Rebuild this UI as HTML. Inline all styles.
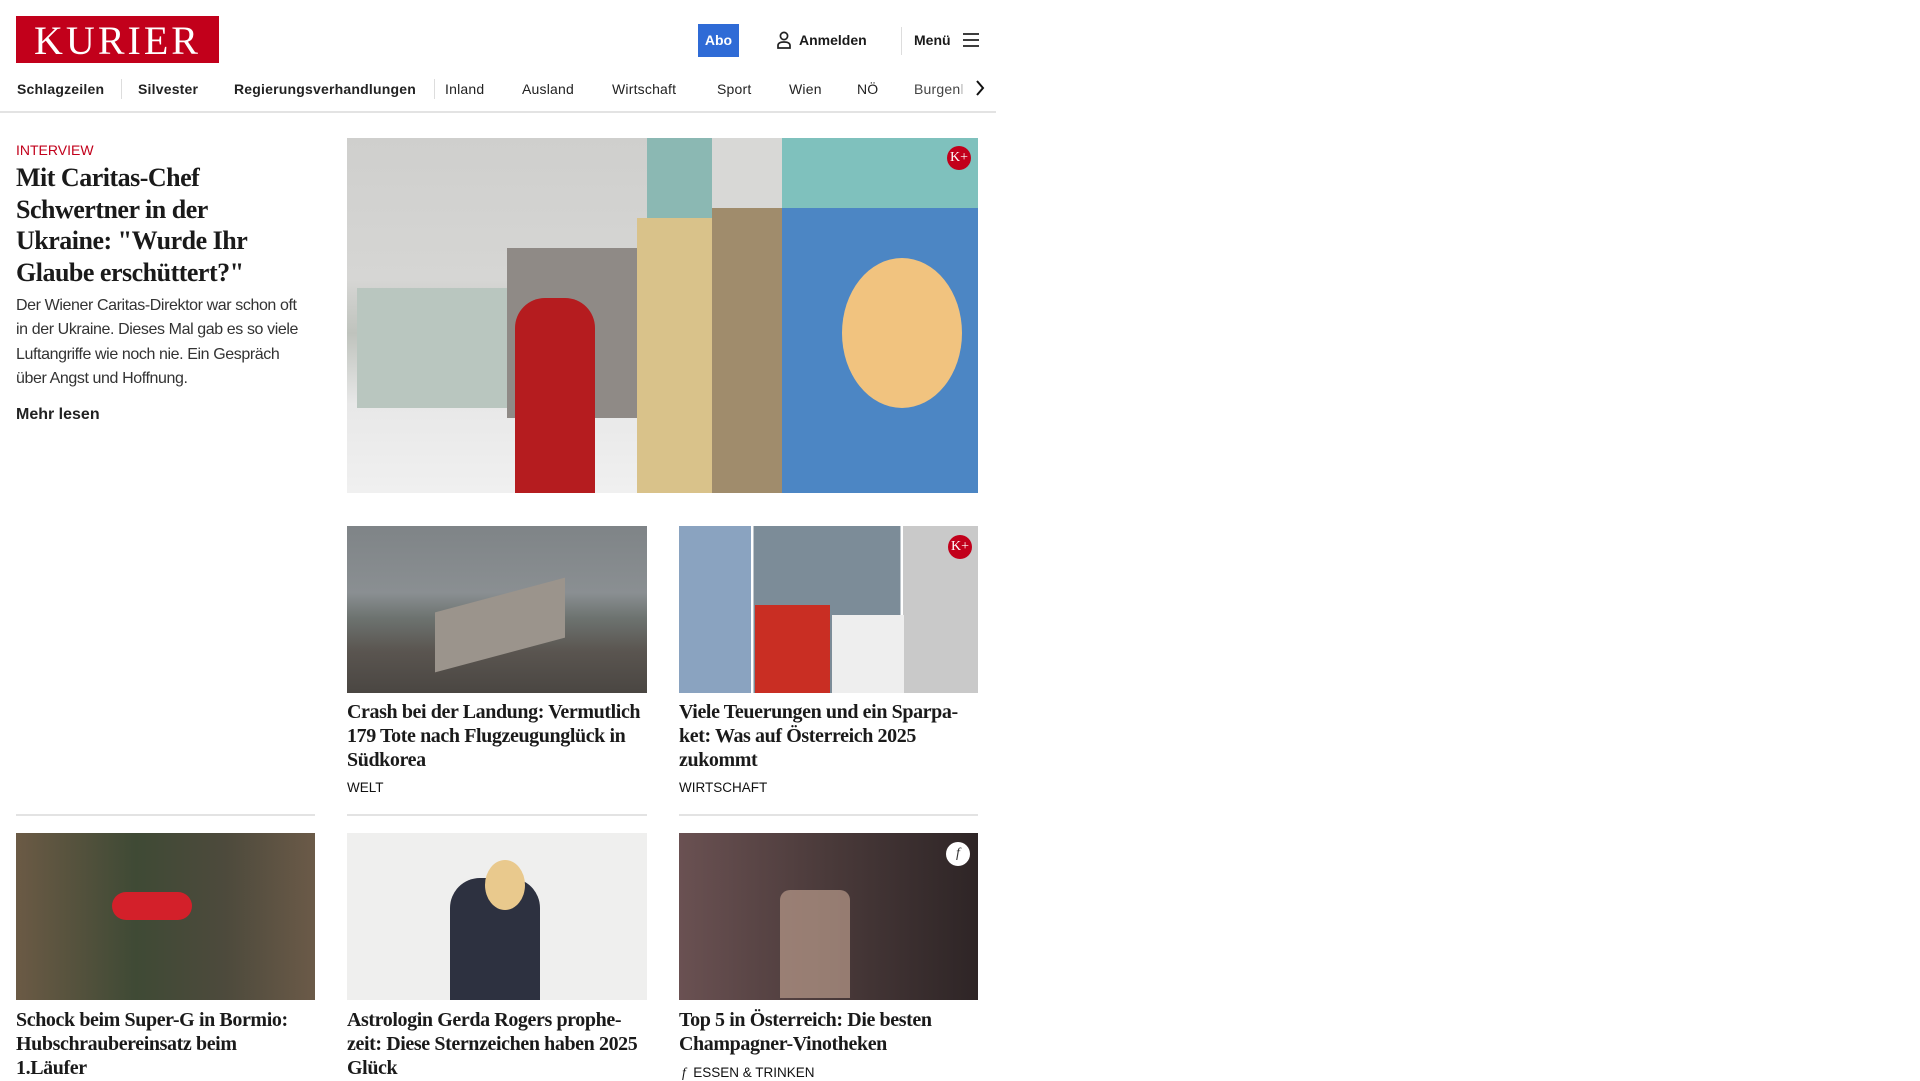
<!DOCTYPE html>
<html><head><meta charset="utf-8"><style>
*{margin:0;padding:0;box-sizing:border-box}
body{width:1920px;height:1080px;background:#fff;font-family:"Liberation Sans",sans-serif;color:#1a1a1a;overflow:hidden;position:relative}
.a{position:absolute}
.logo{left:16px;top:16px;width:203px;height:47px;background:#c2001b;color:#fff;font-family:"Liberation Serif",serif;font-size:40px;letter-spacing:3px;text-align:center;line-height:49px}
.abo{left:698px;top:24px;width:41px;height:33px;background:#2f6bd6;color:#fff;font-weight:bold;font-size:14px;text-align:center;line-height:33px}
.top{font-size:14px;font-weight:bold;top:32px}
.nav{top:81px;font-size:14px;color:#222;letter-spacing:0.2px}
.nav b{font-weight:bold}
.vd{width:1px;background:#ddd}
.serif{font-family:"Liberation Serif",serif;font-weight:bold;color:#1a1a1a}
.ct{font-size:20px;line-height:24px;letter-spacing:-0.4px;white-space:nowrap}
.cat{font-size:13.5px;color:#111}
.hr{height:2px;background:#e3e3e3}
.plus{width:24px;height:24px;border-radius:50%;background:#c2001b;color:#fff;font-family:"Liberation Serif",serif;font-size:14px;text-align:center;line-height:24px}
</style></head><body>
<div class="a logo">KURIER</div>
<div class="a abo">Abo</div>
<svg class="a" style="left:776px;top:31px" width="16" height="18" viewBox="0 0 16 18"><circle cx="8" cy="5" r="3.6" fill="none" stroke="#222" stroke-width="1.7"/><path d="M2 17v-2.5c0-2 2-3.5 6-3.5s6 1.5 6 3.5V17z" fill="none" stroke="#222" stroke-width="1.7"/></svg>
<div class="a top" style="left:799px">Anmelden</div>
<div class="a vd" style="left:901px;top:27px;height:28px"></div>
<div class="a top" style="left:914px">Menü</div>
<svg class="a" style="left:963px;top:33px" width="16" height="14"><path d="M0 1h16M0 7h16M0 13h16" stroke="#222" stroke-width="1.7"/></svg>

<div class="a nav" style="left:17px"><b>Schlagzeilen</b></div>
<div class="a vd" style="left:121px;top:79px;height:20px"></div>
<div class="a nav" style="left:138px"><b>Silvester</b></div>
<div class="a nav" style="left:234px"><b>Regierungsverhandlungen</b></div>
<div class="a vd" style="left:434px;top:79px;height:20px"></div>
<div class="a nav" style="left:445px">Inland</div>
<div class="a nav" style="left:522px">Ausland</div>
<div class="a nav" style="left:612px">Wirtschaft</div>
<div class="a nav" style="left:717px">Sport</div>
<div class="a nav" style="left:789px">Wien</div>
<div class="a nav" style="left:857px">NÖ</div>
<div class="a nav" style="left:914px;color:#444">Burgen<span style="color:#bbb">l</span></div>
<svg class="a" style="left:975px;top:79px" width="10" height="18"><path d="M2 2l6 7-6 7" fill="none" stroke="#111" stroke-width="2"/></svg>
<div class="a" style="left:0;top:111px;width:996px;height:2px;background:#e3e3e3"></div>

<div class="a" style="left:16px;top:142px;font-size:14px;color:#c2001b">INTERVIEW</div>
<div class="a serif" style="left:16px;top:162px;font-size:26px;line-height:31.5px;letter-spacing:-0.5px;white-space:nowrap">Mit Caritas-Chef<br>Schwertner in der<br>Ukraine: "Wurde Ihr<br>Glaube erschüttert?"</div>
<div class="a" style="left:16px;top:294px;font-size:16px;line-height:24.3px;color:#333;letter-spacing:-0.4px;white-space:nowrap">Der Wiener Caritas-Direktor war schon oft<br>in der Ukraine. Dieses Mal gab es so viele<br>Luftangriffe wie noch nie. Ein Gespräch<br>über Angst und Hoffnung.</div>
<div class="a" style="left:16px;top:406px;font-size:16px;font-weight:bold;color:#222">Mehr lesen</div>

<!-- main image -->
<div class="a" style="left:347px;top:138px;width:631px;height:355px;overflow:hidden;background:#d8d8d6">
 <div class="a" style="left:0;top:0;width:305px;height:355px;background:linear-gradient(#cfcfcd 0,#d6d6d4 40%,#bfc3bd 55%,#e8e8e8 75%,#f0f0f0 100%)"></div>
 <div class="a" style="left:10px;top:150px;width:160px;height:120px;background:#b9c6bf"></div>
 <div class="a" style="left:160px;top:110px;width:130px;height:170px;background:#8f8a86"></div>
 <div class="a" style="left:168px;top:160px;width:80px;height:195px;background:#b51c1f;border-radius:30px 30px 0 0"></div>
 <div class="a" style="left:300px;top:0;width:65px;height:355px;background:#8bb8b3"></div>
 <div class="a" style="left:290px;top:80px;width:80px;height:275px;background:#d9c28a"></div>
 <div class="a" style="left:365px;top:70px;width:70px;height:285px;background:#a08c6c"></div>
 <div class="a" style="left:435px;top:0;width:200px;height:355px;background:#4c86c4"></div>
 <div class="a" style="left:435px;top:0;width:200px;height:70px;background:#7fc1bd"></div>
 <div class="a" style="left:495px;top:120px;width:120px;height:150px;background:#f1c37f;border-radius:50%"></div>
 <div class="a plus" style="left:600px;top:8px">K+</div>
</div>

<!-- row 2 -->
<div class="a" style="left:347px;top:526px;width:300px;height:167px;background:linear-gradient(#7f8487 0,#8a8f92 40%,#6d7370 55%,#5a5550 75%,#4a4642 100%)"></div>
<div class="a" style="left:435px;top:595px;width:130px;height:60px;background:#9b948c;transform:skewY(-15deg)"></div>
<div class="a" style="left:679px;top:526px;width:299px;height:167px;background:linear-gradient(90deg,#8aa3c0 0,#8aa3c0 24%,#fff 24%,#fff 25%,#7c8c98 25%,#7c8c98 74%,#fff 74%,#fff 75%,#c9c9c9 75%)"></div>
<div class="a" style="left:755px;top:605px;width:75px;height:88px;background:#c92e23"></div>
<div class="a" style="left:832px;top:615px;width:72px;height:78px;background:#eee"></div>
<div class="a plus" style="left:948px;top:535px">K+</div>

<div class="a serif ct" style="left:347px;top:700px">Crash bei der Landung: Vermutlich<br>179 Tote nach Flugzeugunglück in<br>Südkorea</div>
<div class="a cat" style="left:347px;top:780px">WELT</div>
<div class="a serif ct" style="left:679px;top:700px">Viele Teuerungen und ein Sparpa-<br>ket: Was auf Österreich 2025<br>zukommt</div>
<div class="a cat" style="left:679px;top:780px">WIRTSCHAFT</div>

<div class="a hr" style="left:16px;top:814px;width:299px"></div>
<div class="a hr" style="left:347px;top:814px;width:300px"></div>
<div class="a hr" style="left:679px;top:814px;width:299px"></div>

<!-- row 3 -->
<div class="a" style="left:16px;top:833px;width:299px;height:167px;background:linear-gradient(90deg,#6b5a45,#3f4a35 40%,#4d4a3c 70%,#6b5a48)"></div>
<div class="a" style="left:112px;top:892px;width:80px;height:28px;background:#d3202a;border-radius:14px"></div>
<div class="a" style="left:347px;top:833px;width:300px;height:167px;background:#efefee"></div>
<div class="a" style="left:450px;top:878px;width:90px;height:122px;background:#2d3140;border-radius:30px 30px 0 0"></div>
<div class="a" style="left:485px;top:860px;width:40px;height:50px;background:#e9c98d;border-radius:50%"></div>
<div class="a" style="left:679px;top:833px;width:299px;height:167px;background:linear-gradient(90deg,#6a5152,#4a3a3a 50%,#2e2526)"></div>
<div class="a" style="left:780px;top:890px;width:70px;height:108px;background:#b89a8a;opacity:.7;border-radius:10px 10px 0 0"></div>
<div class="a" style="left:946px;top:842px;width:24px;height:24px;border-radius:50%;background:#fff;color:#333;font-family:'Liberation Serif',serif;font-style:italic;font-size:14px;text-align:center;line-height:24px">f</div>

<div class="a serif ct" style="left:16px;top:1008px">Schock beim Super-G in Bormio:<br>Hubschraubereinsatz beim<br>1.Läufer</div>
<div class="a serif ct" style="left:347px;top:1008px">Astrologin Gerda Rogers prophe-<br>zeit: Diese Sternzeichen haben 2025<br>Glück</div>
<div class="a serif ct" style="left:679px;top:1008px">Top 5 in Österreich: Die besten<br>Champagner-Vinotheken</div>
<div class="a cat" style="left:682px;top:1065px"><i style="font-family:'Liberation Serif',serif">f</i>&nbsp; ESSEN &amp; TRINKEN</div>
</body></html>
